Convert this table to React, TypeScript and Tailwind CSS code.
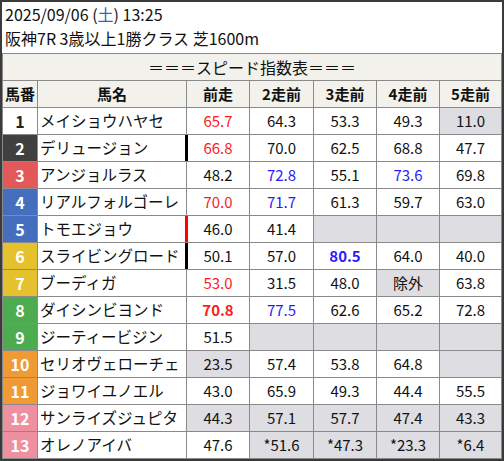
import React from "react";

type Cell = { v: string; c?: "r" | "b"; bold?: boolean; gray?: boolean };

interface Horse {
  no: number;
  name: string;
  gate: string;
  mark?: "black" | "red";
  cells: Cell[];
}

const G = (v = ""): Cell => ({ v, gray: true });

const horses: Horse[] = [
  { no: 1, name: "メイショウハヤセ", gate: "bg-white text-[#222]", cells: [{ v: "65.7", c: "r" }, { v: "64.3" }, { v: "53.3" }, { v: "49.3" }, G("11.0")] },
  { no: 2, name: "デリュージョン", gate: "bg-[#404040] text-white", mark: "black", cells: [{ v: "66.8", c: "r" }, { v: "70.0" }, { v: "62.5" }, { v: "68.8" }, { v: "47.7" }] },
  { no: 3, name: "アンジョルラス", gate: "bg-[#e35858] text-white", cells: [{ v: "48.2" }, { v: "72.8", c: "b" }, { v: "55.1" }, { v: "73.6", c: "b" }, { v: "69.8" }] },
  { no: 4, name: "リアルフォルゴーレ", gate: "bg-[#466ebf] text-white", cells: [{ v: "70.0", c: "r" }, { v: "71.7", c: "b" }, { v: "61.3" }, { v: "59.7" }, { v: "63.0" }] },
  { no: 5, name: "トモエジョウ", gate: "bg-[#466ebf] text-white", mark: "red", cells: [{ v: "46.0" }, { v: "41.4" }, G(), G(), G()] },
  { no: 6, name: "スライビングロード", gate: "bg-[#e6c12e] text-white", mark: "black", cells: [{ v: "50.1" }, { v: "57.0" }, { v: "80.5", c: "b", bold: true }, { v: "64.0" }, { v: "40.0" }] },
  { no: 7, name: "ブーディガ", gate: "bg-[#e6c12e] text-white", cells: [{ v: "53.0", c: "r" }, { v: "31.5" }, { v: "48.0" }, G("除外"), { v: "63.8" }] },
  { no: 8, name: "ダイシンビヨンド", gate: "bg-[#4cac4f] text-white", cells: [{ v: "70.8", c: "r", bold: true }, { v: "77.5", c: "b" }, { v: "62.6" }, { v: "65.2" }, { v: "72.8" }] },
  { no: 9, name: "ジーティービジン", gate: "bg-[#4cac4f] text-white", cells: [{ v: "51.5" }, G(), G(), G(), G()] },
  { no: 10, name: "セリオヴェローチェ", gate: "bg-[#ef9a35] text-white", cells: [G("23.5"), { v: "57.4" }, { v: "53.8" }, { v: "64.8" }, G()] },
  { no: 11, name: "ジョワイユノエル", gate: "bg-[#ef9a35] text-white", cells: [{ v: "43.0" }, { v: "65.9" }, { v: "49.3" }, { v: "44.4" }, { v: "55.5" }] },
  { no: 12, name: "サンライズジュピタ", gate: "bg-[#ef8fa2] text-white", cells: [G("44.3"), G("57.1"), G("57.7"), G("47.4"), G("43.3")] },
  { no: 13, name: "オレノアイバ", gate: "bg-[#ef8fa2] text-white", cells: [{ v: "47.6" }, G("*51.6"), G("*47.3"), G("*23.3"), G("*6.4")] },
];

const heads = ["前走", "2走前", "3走前", "4走前", "5走前"];

export default function App() {
  return (
    <div
      className="w-[504px] h-[461px] border-2 border-[#3a3a3a] bg-white text-[#111] overflow-hidden"
      style={{ fontFamily: '"Noto Sans CJK JP", "Noto Sans", sans-serif' }}
    >
      <div className="h-[51px] px-[3px] text-[16px] leading-[24px]">
        <div>
          2025/09/06 (<span className="text-[#3b5fc0]">土</span>) 13:25
        </div>
        <div>阪神7R 3歳以上1勝クラス 芝1600m</div>
      </div>

      <div className="grid grid-cols-[34px_148px_62px_63px_62px_62px_61px] auto-rows-[26px] gap-px bg-[#8a8a8a] p-px">
        <div className="col-span-7 bg-[#f2f1ec] flex items-center justify-center text-[16px]">
          ＝＝＝スピード指数表＝＝＝
        </div>

        <div className="bg-[#f2f1ec] flex items-center justify-center text-[15px] font-bold">馬番</div>
        <div className="bg-[#f2f1ec] flex items-center justify-center text-[15px] font-bold">馬名</div>
        {heads.map((h) => (
          <div key={h} className="bg-[#f2f1ec] flex items-center justify-center text-[15px] font-bold">
            {h}
          </div>
        ))}

        {horses.map((h) => (
          <React.Fragment key={h.no}>
            <div className={`${h.gate} flex items-center justify-center text-[16px] font-bold`}>{h.no}</div>
            <div className="bg-white flex items-center pl-[2px] text-[15.5px] whitespace-nowrap overflow-hidden">
              {h.name}
            </div>
            {h.cells.map((c, i) => (
              <div
                key={i}
                className={`relative flex items-center justify-center text-[15px] ${c.gray ? "bg-[#dddde2]" : "bg-white"} ${
                  c.c === "r" ? "text-[#ff1a1a]" : c.c === "b" ? "text-[#2a1aff]" : ""
                } ${c.bold ? "font-bold" : ""}`}
              >
                {i === 0 && h.mark && (
                  <span
                    className={`absolute left-[-2px] top-0 bottom-0 w-[3px] ${
                      h.mark === "red" ? "bg-[#ff0000]" : "bg-black"
                    }`}
                  />
                )}
                {c.v}
              </div>
            ))}
          </React.Fragment>
        ))}
      </div>
    </div>
  );
}
